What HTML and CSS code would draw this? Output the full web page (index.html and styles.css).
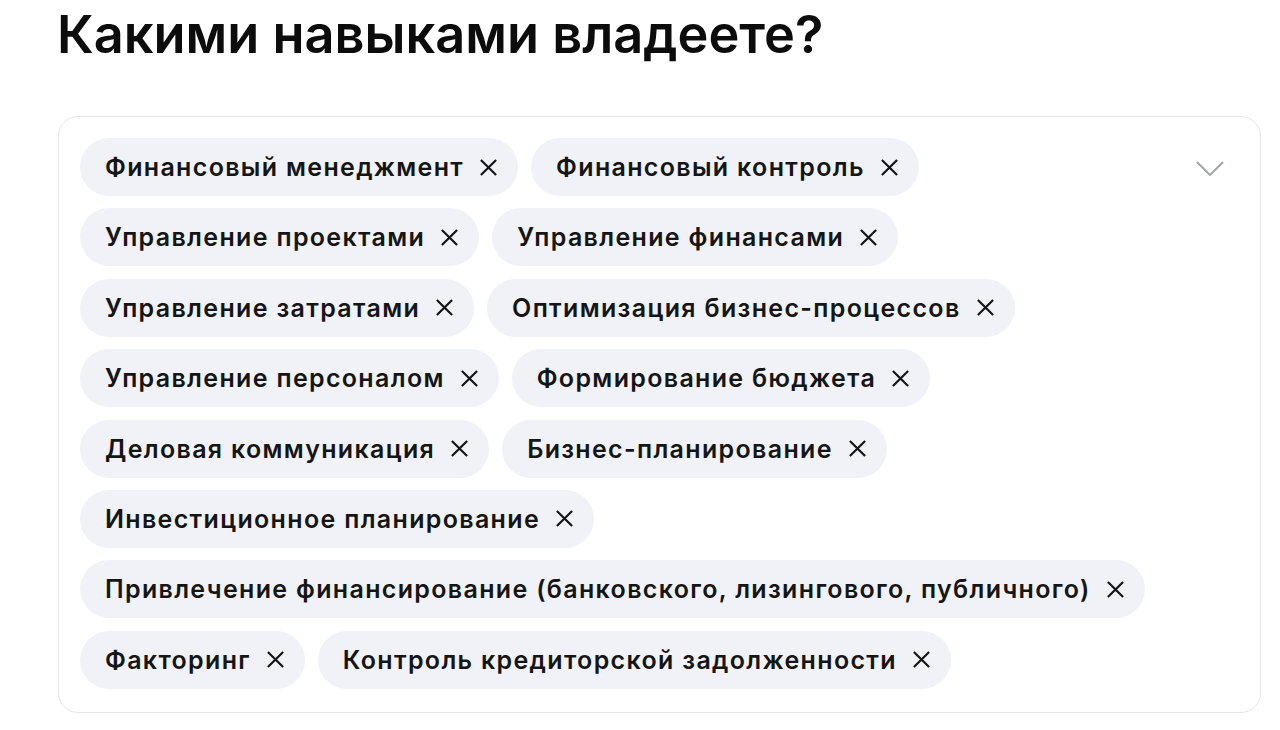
FILE: index.html
```html
<!DOCTYPE html>
<html lang="ru">
<head>
<meta charset="utf-8">
<link rel="stylesheet" href="styles.css">
</head>
<body>
<h1 class="title">Какими навыками владеете?</h1>
<div class="select">
  <div class="chips">
    <span class="chip">Финансовый менеджмент<svg class="x" viewBox="0 0 20 20"><path d="M2 2L18 18M18 2L2 18"/></svg></span>
    <span class="chip">Финансовый контроль<svg class="x" viewBox="0 0 20 20"><path d="M2 2L18 18M18 2L2 18"/></svg></span>
    <span class="chip">Управление проектами<svg class="x" viewBox="0 0 20 20"><path d="M2 2L18 18M18 2L2 18"/></svg></span>
    <span class="chip">Управление финансами<svg class="x" viewBox="0 0 20 20"><path d="M2 2L18 18M18 2L2 18"/></svg></span>
    <span class="chip">Управление затратами<svg class="x" viewBox="0 0 20 20"><path d="M2 2L18 18M18 2L2 18"/></svg></span>
    <span class="chip">Оптимизация бизнес-процессов<svg class="x" viewBox="0 0 20 20"><path d="M2 2L18 18M18 2L2 18"/></svg></span>
    <span class="chip">Управление персоналом<svg class="x" viewBox="0 0 20 20"><path d="M2 2L18 18M18 2L2 18"/></svg></span>
    <span class="chip">Формирование бюджета<svg class="x" viewBox="0 0 20 20"><path d="M2 2L18 18M18 2L2 18"/></svg></span>
    <span class="chip">Деловая коммуникация<svg class="x" viewBox="0 0 20 20"><path d="M2 2L18 18M18 2L2 18"/></svg></span>
    <span class="chip">Бизнес-планирование<svg class="x" viewBox="0 0 20 20"><path d="M2 2L18 18M18 2L2 18"/></svg></span>
    <span class="chip">Инвестиционное планирование<svg class="x" viewBox="0 0 20 20"><path d="M2 2L18 18M18 2L2 18"/></svg></span>
    <span class="chip">Привлечение финансирование (банковского, лизингового, публичного)<svg class="x" viewBox="0 0 20 20"><path d="M2 2L18 18M18 2L2 18"/></svg></span>
    <span class="chip">Факторинг<svg class="x" viewBox="0 0 20 20"><path d="M2 2L18 18M18 2L2 18"/></svg></span>
    <span class="chip">Контроль кредиторской задолженности<svg class="x" viewBox="0 0 20 20"><path d="M2 2L18 18M18 2L2 18"/></svg></span>
  </div>
  <svg class="chev" viewBox="0 0 30 16"><path d="M1 1L15 15L29 1"/></svg>
</div>
</body>
</html>
```
FILE: styles.css
```css
html, body {
  margin: 0;
  padding: 0;
  background: #fff;
}
body {
  font-family: Inter, "Noto Sans", sans-serif;
  color: #111;
  padding: 0 19px 0 57px;
}
.title {
  margin: 0;
  padding-top: 2px;
  font-size: 52.3px;
  font-weight: 600;
  line-height: 64px;
  letter-spacing: 0;
  color: #0c0c0c;
}
.select {
  margin-top: 50px;
  margin-left: 1px;
  border: 1.5px solid #e4e6ea;
  border-radius: 20px;
  padding: 21px 36px 23px 21px;
  display: flex;
  align-items: flex-start;
  justify-content: space-between;
  width: 1203px;
  box-sizing: border-box;
}
.chips {
  display: flex;
  flex-wrap: wrap;
  gap: 12.4px 13px;
  width: 1090px;
}
.chip {
  display: inline-flex;
  align-items: center;
  height: 58px;
  padding: 0 20px 0 25px;
  border-radius: 29px;
  background: #f0f2f7;
  font-size: 25px;
  font-weight: 600;
  letter-spacing: 1.33px;
  color: #151515;
  box-sizing: border-box;
}
.x {
  width: 19px;
  height: 19px;
  margin-left: 15px;
  fill: none;
  stroke: #151515;
  stroke-width: 2.3;
}
.chev {
  width: 28px;
  height: 15px;
  margin-top: 23px;
  fill: none;
  stroke: #a3a7ae;
  stroke-width: 2.2;
}
```
